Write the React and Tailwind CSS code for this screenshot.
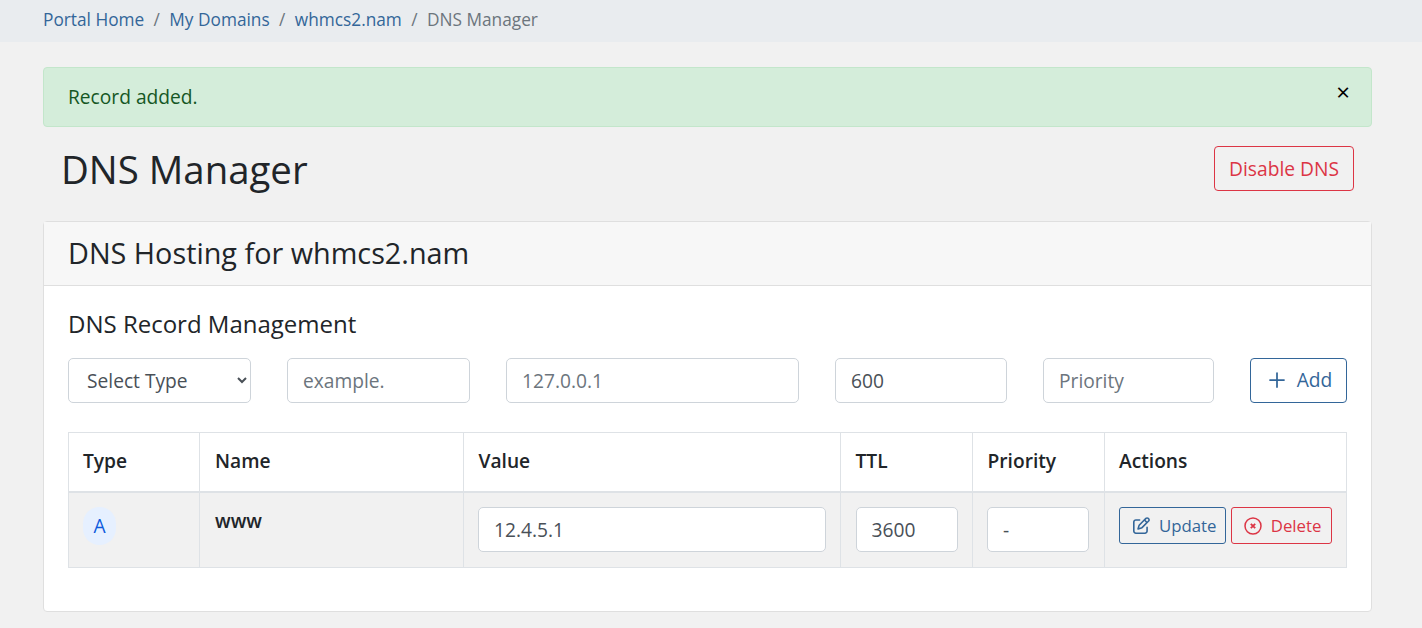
import React from "react";
import { FaRegPenToSquare } from "react-icons/fa6";
import { Plus } from "lucide-react";

const inputCls = "h-[45px] rounded-[5px] border border-[#ced4da] bg-white px-[15px] text-[19.2px] text-[#495057] placeholder:text-[#6c757d] outline-none";

function Crumb({ children }) {
  return <a className="text-[#336699]">{children}</a>;
}
function Sep() {
  return <span className="px-[9.4px] text-[#6c757d]">/</span>;
}

export default function App() {
  return (
    <div className="min-h-[628px] bg-[#f1f1f1] text-[#212529]" style={{ fontFamily: '"Open Sans", sans-serif' }}>
      <nav className="flex h-[42px] items-center bg-[#e9ecef] pb-[2px] pl-[43px] text-[17.28px]">
        <Crumb>Portal Home</Crumb>
        <Sep />
        <Crumb>My Domains</Crumb>
        <Sep />
        <Crumb>whmcs2.nam</Crumb>
        <Sep />
        <span className="text-[#6c757d]">DNS Manager</span>
      </nav>

      <main className="px-[43px] pr-[50px] pt-[25px]">
        <div className="relative flex h-[60px] items-center rounded-[4px] border border-[#c3e6cb] bg-[#d4edda] px-[24px] text-[19.2px] text-[#155724]">
          Record added.
          <span className="absolute right-[21px] top-[9px] text-[24px] leading-[30px] font-medium text-black">×</span>
        </div>

        <div className="mt-[19px] flex h-[45px] items-center justify-between pl-[18px] pr-[18px]">
          <h1 className="text-[38.4px] leading-[48px] font-normal">DNS Manager</h1>
          <button className="h-[45px] w-[140px] rounded-[4px] border border-[#dc3545] pt-[1px] text-[19.2px] text-[#dc3545]">Disable DNS</button>
        </div>

        <section className="mt-[30px] h-[391px] rounded-[4px] border border-[#dfdfdf] bg-white">
          <header className="flex h-[64px] items-center border-b border-[#dfdfdf] bg-[#f7f7f7] px-[24px] pb-[2px] text-[28.8px]">
            DNS Hosting for whmcs2.nam
          </header>
          <div className="px-[24px] pt-[22px]">
            <h2 className="text-[24px] leading-[32px] font-normal">DNS Record Management</h2>

            <div className="mt-[18px] flex gap-[36px]">
              <select defaultValue="" className={"w-[183px] pl-[14px] " + inputCls}>
                <option value="">Select Type</option>
              </select>
              <input placeholder="example." className={"w-[183px] " + inputCls} />
              <input placeholder="127.0.0.1" className={"w-[293px] " + inputCls} />
              <input defaultValue="600" className={"w-[172px] " + inputCls} />
              <input placeholder="Priority" className={"w-[171px] " + inputCls} />
              <button className="flex h-[45px] w-[97px] items-center justify-center gap-[8px] rounded-[4px] border border-[#336699] pb-[1px] text-[19.2px] text-[#336699]">
                <Plus size={24} strokeWidth={1.75} />
                Add
              </button>
            </div>

            <table className="mt-[29px] w-[1278px] table-fixed border-collapse text-[19.2px]">
              <colgroup>
                <col className="w-[131px]" />
                <col className="w-[264px]" />
                <col className="w-[377px]" />
                <col className="w-[132px]" />
                <col className="w-[132px]" />
                <col className="w-[242px]" />
              </colgroup>
              <thead>
                <tr className="h-[59px] bg-white">
                  <th className="border border-b-2 border-[#dee2e6] pl-[14px] pr-[14.5px] pb-[1px] text-left font-semibold">Type</th>
                  <th className="border border-b-2 border-[#dee2e6] px-[15px] pb-[1px] text-left font-semibold">Name</th>
                  <th className="border border-b-2 border-[#dee2e6] px-[14.5px] pb-[1px] text-left font-semibold">Value</th>
                  <th className="border border-b-2 border-[#dee2e6] px-[14.5px] pb-[1px] text-left font-semibold">TTL</th>
                  <th className="border border-b-2 border-[#dee2e6] px-[14.5px] pb-[1px] text-left font-semibold">Priority</th>
                  <th className="border border-b-2 border-[#dee2e6] pl-[14px] pr-[14.5px] pb-[1px] text-left font-semibold">Actions</th>
                </tr>
              </thead>
              <tbody>
                <tr className="h-[76px] bg-[#f1f1f1] align-top">
                  <td className="border border-[#dee2e6] pl-[14px] pr-[14.5px] pt-[14px]">
                    <span className="flex h-[38px] w-[33px] items-center justify-center rounded-full bg-[#e6f0ff] pt-[1px] font-medium text-[#0d5bdd]">A</span>
                  </td>
                  <td className="border border-[#dee2e6] px-[15px] pt-[14px] font-semibold leading-[27px]">www</td>
                  <td className="border border-[#dee2e6] pl-[14px] pr-[14.5px] pt-[14px]">
                    <input defaultValue="12.4.5.1" className={"w-full " + inputCls} />
                  </td>
                  <td className="border border-[#dee2e6] px-[14.5px] pt-[14px]">
                    <input defaultValue="3600" className={"w-full " + inputCls} />
                  </td>
                  <td className="border border-[#dee2e6] pl-[14px] pr-[15px] pt-[14px]">
                    <input defaultValue="-" className={"w-full " + inputCls} />
                  </td>
                  <td className="border border-[#dee2e6] pl-[14px] pr-[14.5px] pt-[14px]">
                    <div className="flex gap-[5px]">
                      <button className="flex h-[37px] w-[107px] items-center gap-[9px] rounded-[3px] border border-[#336699] pl-[13px] pt-[1px] text-[16.8px] text-[#336699]">
                        <FaRegPenToSquare size={17} />
                        Update
                      </button>
                      <button className="flex h-[37px] w-[101px] items-center gap-[9px] rounded-[3px] border border-[#dc3545] pl-[12px] pt-[1px] text-[16.8px] text-[#dc3545]">
                        <svg width="18" height="18" viewBox="0 0 18 18" fill="none" stroke="currentColor">
                          <circle cx="9" cy="9" r="8" strokeWidth="1.5" />
                          <path d="M6.8 6.8 11.2 11.2M11.2 6.8 6.8 11.2" strokeWidth="1.8" />
                        </svg>
                        Delete
                      </button>
                    </div>
                  </td>
                </tr>
              </tbody>
            </table>
          </div>
        </section>
      </main>
    </div>
  );
}
